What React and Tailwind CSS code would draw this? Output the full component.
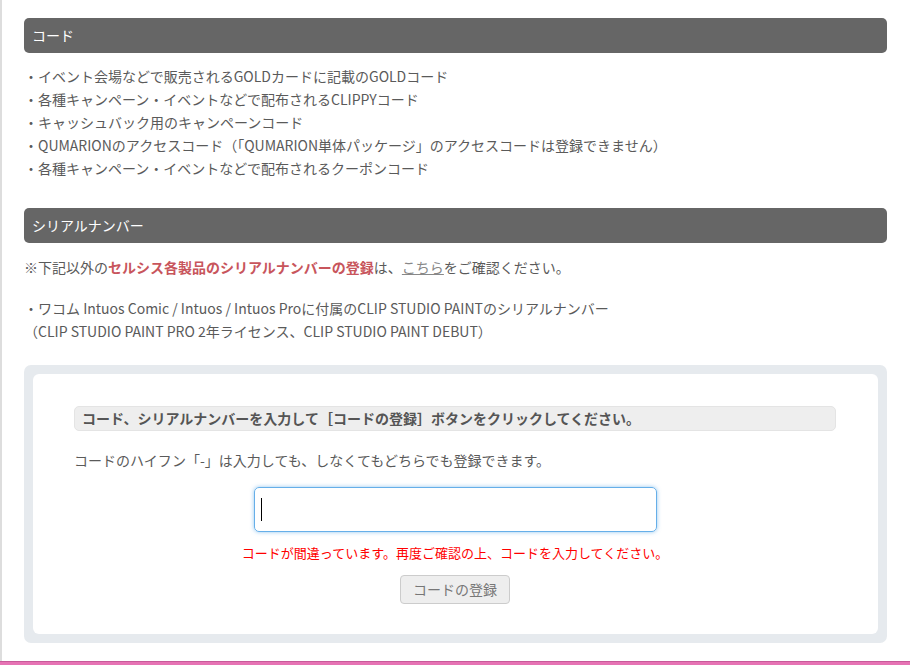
const codeItems = [
  "・イベント会場などで販売されるGOLDカードに記載のGOLDコード",
  "・各種キャンペーン・イベントなどで配布されるCLIPPYコード",
  "・キャッシュバック用のキャンペーンコード",
  "・QUMARIONのアクセスコード（「QUMARION単体パッケージ」のアクセスコードは登録できません）",
  "・各種キャンペーン・イベントなどで配布されるクーポンコード",
];

const font = { fontFamily: '"Noto Sans CJK JP", "Noto Sans", sans-serif' };

const SectionHeader = ({ children, className = "" }) => (
  <div
    className={`flex h-[35px] items-center rounded-[5px] bg-[#666666] pl-[8px] text-[14px] text-white ${className}`}
  >
    {children}
  </div>
);

export default function App() {
  return (
    <div style={font} className="flex h-[665px] w-full flex-col overflow-hidden bg-white">
      <div className="flex-1 border-l-2 border-[#dddddd] pl-[22px] pr-[23px] pt-[18px]">
        <SectionHeader>コード</SectionHeader>
        <ul className="mt-[12px] text-[14px] leading-[23px] text-[#5a5a5a]">
          {codeItems.map((item) => (
            <li key={item} className="whitespace-nowrap">{item}</li>
          ))}
        </ul>

        <SectionHeader className="mt-[28px]">シリアルナンバー</SectionHeader>
        <p className="mt-[13px] text-[14px] leading-[23px] text-[#5a5a5a]">
          ※下記以外の
          <span className="font-bold text-[#c8555c]">セルシス各製品のシリアルナンバーの登録</span>
          は、
          <a href="#" className="text-[#888888] underline">こちら</a>
          をご確認ください。
        </p>
        <p className="mt-[18px] text-[14px] leading-[23px] text-[#5a5a5a]">
          ・ワコム Intuos Comic / Intuos / Intuos Proに付属のCLIP STUDIO PAINTのシリアルナンバー
          <br />
          （CLIP STUDIO PAINT PRO 2年ライセンス、CLIP STUDIO PAINT DEBUT）
        </p>

        <div className="mt-[22px] rounded-[7px] bg-[#e6eaee] p-[9px]">
          <div className="flex flex-col items-center rounded-[6px] bg-white pb-[30px] pl-[41px] pr-[42px] pt-[32px]">
            <div className="flex h-[25px] w-full items-center rounded-[5px] border border-[#e4e4e4] bg-[#eeeeee] pl-[7px] text-[14px] font-bold text-[#555555]">
              コード、シリアルナンバーを入力して［コードの登録］ボタンをクリックしてください。
            </div>
            <p className="mt-[18px] w-full text-[14px] leading-[23px] text-[#5a5a5a]">
              コードのハイフン「-」は入力しても、しなくてもどちらでも登録できます。
            </p>
            <div className="relative mt-[15px]">
              <input
                type="text"
                className="h-[45px] w-[403px] rounded-[5px] border border-[#66afe9] px-[6px] text-[16px] shadow-[0_0_4px_rgba(102,175,233,0.7)] outline-none"
              />
              <span className="absolute left-[7px] top-[11px] h-[23px] w-px bg-black" />
            </div>
            <p className="mt-[11px] text-[13px] leading-[20px] text-[#ff0000]">
              コードが間違っています。再度ご確認の上、コードを入力してください。
            </p>
            <button className="mt-[12px] h-[29px] w-[110px] rounded-[4px] border border-[#cccccc] bg-[#eeeeee] text-[14px] text-[#777777]">
              コードの登録
            </button>
          </div>
        </div>
      </div>
      <div className="h-[4px] border-t border-[#c85a9a] bg-[#e673b4]" />
    </div>
  );
}
